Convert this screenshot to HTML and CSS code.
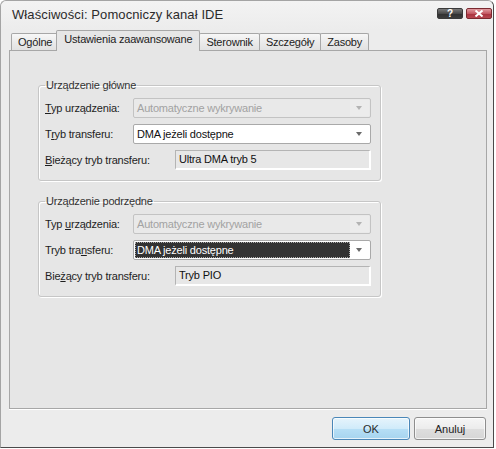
FILE: index.html
```html
<!DOCTYPE html>
<html lang="pl">
  <head>
    <meta charset="UTF-8" />
    <title>Właściwości: Pomocniczy kanał IDE</title>
    <link rel="stylesheet" href="styles.css">
  </head>
  <body>
    <div class="window">
      <div class="titlebar">
        <span class="title">Właściwości: Pomocniczy kanał IDE</span>
        <div class="caption-btns">
          <button class="cap-btn cap-help">?</button>
          <button class="cap-btn cap-close">
            <svg width="10" height="7" viewBox="0 0 10 7">
              <path d="M1.5 0.5 L8.5 6.5 M8.5 0.5 L1.5 6.5" stroke="#fff" stroke-width="2" fill="none" />
            </svg>
          </button>
        </div>
      </div>

      <div class="content">
        <div class="tabs">
          <div class="tab">Ogólne</div>
          <div class="tab active">Ustawienia zaawansowane</div>
          <div class="tab">Sterownik</div>
          <div class="tab">Szczegóły</div>
          <div class="tab">Zasoby</div>
        </div>

        <div class="panel">
          <!-- urządzenie główne -->
          <fieldset class="group">
            <legend>Urządzenie główne</legend>
            <div class="row">
              <label class="lbl"><u>T</u>yp urządzenia:</label>
              <div class="combo disabled">
                <span class="combo-text">Automatyczne wykrywanie</span>
                <span class="arrow"></span>
              </div>
            </div>
            <div class="row">
              <label class="lbl">T<u>r</u>yb transferu:</label>
              <div class="combo">
                <span class="combo-text">DMA jeżeli dostępne</span>
                <span class="arrow"></span>
              </div>
            </div>
            <div class="row">
              <label class="lbl lbl-wide"><u>B</u>ieżący tryb transferu:</label>
              <div class="textbox">Ultra DMA tryb 5</div>
            </div>
          </fieldset>

          <!-- urządzenie podrzędne -->
          <fieldset class="group">
            <legend>Urządzenie podrzędne</legend>
            <div class="row">
              <label class="lbl">Typ <u>u</u>rządzenia:</label>
              <div class="combo disabled">
                <span class="combo-text">Automatyczne wykrywanie</span>
                <span class="arrow"></span>
              </div>
            </div>
            <div class="row">
              <label class="lbl">Tryb tra<u>n</u>sferu:</label>
              <div class="combo focused">
                <span class="combo-text">DMA jeżeli dostępne</span>
                <span class="arrow"></span>
              </div>
            </div>
            <div class="row">
              <label class="lbl lbl-wide">Bie<u>ż</u>ący tryb transferu:</label>
              <div class="textbox">Tryb PIO</div>
            </div>
          </fieldset>
        </div>
      </div>

      <div class="footer">
        <button class="btn btn-default">OK</button>
        <button class="btn">Anuluj</button>
      </div>
    </div>
  </body>
</html>
```

FILE: styles.css
```css
* {
  box-sizing: border-box;
}

body {
  margin: 0;
  background: #fff;
  font-family: "Liberation Sans", Arial, sans-serif;
  font-size: 11px;
  letter-spacing: -0.2px;
  color: #1e1e1e;
}

button {
  margin: 0;
  padding: 0;
  font: inherit;
}

.window {
  width: 494px;
  height: 448px;
  display: flex;
  flex-direction: column;
  background: #ececec;
  border: 1px solid #a4a4a4;
  border-right-color: #4a4a4a;
  border-bottom-color: #4a4a4a;
  border-radius: 6px 6px 0 0;
}

/* title bar */
.titlebar {
  height: 29px;
  display: flex;
  align-items: flex-start;
  justify-content: space-between;
  padding: 0 1px 0 11px;
  background: linear-gradient(#f3f3f3, #ececec);
  border-radius: 6px 6px 0 0;
}

.title {
  margin-top: 6px;
  font-size: 13px;
  letter-spacing: 0.1px;
  color: #2b2b2b;
}

.caption-btns {
  display: flex;
  gap: 3px;
  margin-top: 7px;
}

.cap-btn {
  width: 26px;
  height: 11px;
  display: flex;
  align-items: center;
  justify-content: center;
  border: 1px solid #3a3a3a;
  border-radius: 2px;
  color: #fff;
  font-weight: bold;
  font-size: 10px;
  line-height: 1;
}

.cap-help {
  background: linear-gradient(#7a7a7a, #4a4a4a 50%, #303030 51%, #3c3c3c);
}

.cap-close {
  border-color: #7a2a30;
  background: linear-gradient(#e19ba0, #c45a64 50%, #a8323e 51%, #b84650);
}

/* tabs */
.content {
  padding: 0 6px 0 8px;
}

.tabs {
  height: 20px;
  display: flex;
  align-items: flex-end;
  padding-left: 2px;
  position: relative;
  z-index: 1;
}

.tab {
  height: 17px;
  padding: 2px 6px 0;
  border: 1px solid #a7a7a7;
  border-bottom: none;
  border-radius: 2px 2px 0 0;
  margin-right: -1px;
  background: linear-gradient(#f7f7f7, #e9e9e9 60%, #e2e2e2);
  color: #222;
}

.tab.active {
  height: 21px;
  margin: 0 -1px -1px -2px;
  padding: 2px 7px 0 7px;
  background: #e6e6e6;
  position: relative;
  z-index: 2;
}

.panel {
  height: 359px;
  padding: 27px 0 0 28px;
  background: #e6e6e6;
  border: 1px solid #a7a7a7;
  box-shadow: 0 1px 0 #fff;
}

/* group boxes */
.group {
  width: 343px;
  margin: 0 0 13px;
  padding: 6px 9px 10px 6px;
  border: 1px solid #c6c6c6;
  border-radius: 3px;
  box-shadow: inset 1px 1px 0 #fff, 1px 1px 0 #fff;
  display: flex;
  flex-direction: column;
  gap: 6px;
}

.group legend {
  padding: 0 1px;
  line-height: 14px;
  color: #333;
}

.row {
  height: 20px;
  display: flex;
  align-items: center;
}

.lbl {
  width: 88px;
  flex-shrink: 0;
}

.lbl-wide {
  width: 130px;
}

.combo {
  flex: 1;
  height: 20px;
  display: flex;
  align-items: center;
  background: #fff;
  border: 1px solid #a9a9a9;
  border-radius: 2px;
  padding: 1px;
}

.combo-text {
  flex: 1;
  height: 16px;
  line-height: 16px;
  padding-left: 2px;
  color: #111;
}

.arrow {
  width: 19px;
  height: 16px;
  position: relative;
}

.arrow::after {
  content: "";
  position: absolute;
  left: 6px;
  top: 6px;
  border-left: 3.5px solid transparent;
  border-right: 3.5px solid transparent;
  border-top: 4px solid #6a6a6a;
}

.combo.disabled {
  background: #e9e9e9;
  border-color: #c3c3c3;
}

.combo.disabled .combo-text {
  color: #a2a2a2;
}

.combo.disabled .arrow {
  background: #ececec;
}

.combo.disabled .arrow::after {
  border-top-color: #b3b3b3;
}

.combo.focused .combo-text {
  background: #333;
  color: #fff;
  outline: 1px dotted #aaa;
  outline-offset: -1px;
}

.textbox {
  flex: 1;
  height: 20px;
  line-height: 17px;
  padding-left: 3px;
  background: #e7e7e7;
  border-style: solid;
  border-width: 1px 2px 2px 1px;
  border-color: #b4b4b4 #fff #fff #b4b4b4;
  color: #111;
}

/* footer buttons */
.footer {
  flex: 1;
  display: flex;
  justify-content: flex-end;
  align-items: flex-start;
  gap: 4px;
  padding: 8px 7px 0 0;
}

.btn {
  width: 72px;
  height: 23px;
  border: 1px solid #8e8e8e;
  border-radius: 3px;
  background: linear-gradient(#f6f6f6, #ececec 50%, #dedede 51%, #d6d6d6);
  color: #222;
  box-shadow: inset 0 0 0 1px rgba(255, 255, 255, 0.7);
}

.btn-default {
  width: 78px;
  border-color: #4a87b8;
  background: linear-gradient(#e6f4fc, #d0ebfa 50%, #b6dff6 51%, #a6d4ef);
  color: #2a2a2a;
}
```
